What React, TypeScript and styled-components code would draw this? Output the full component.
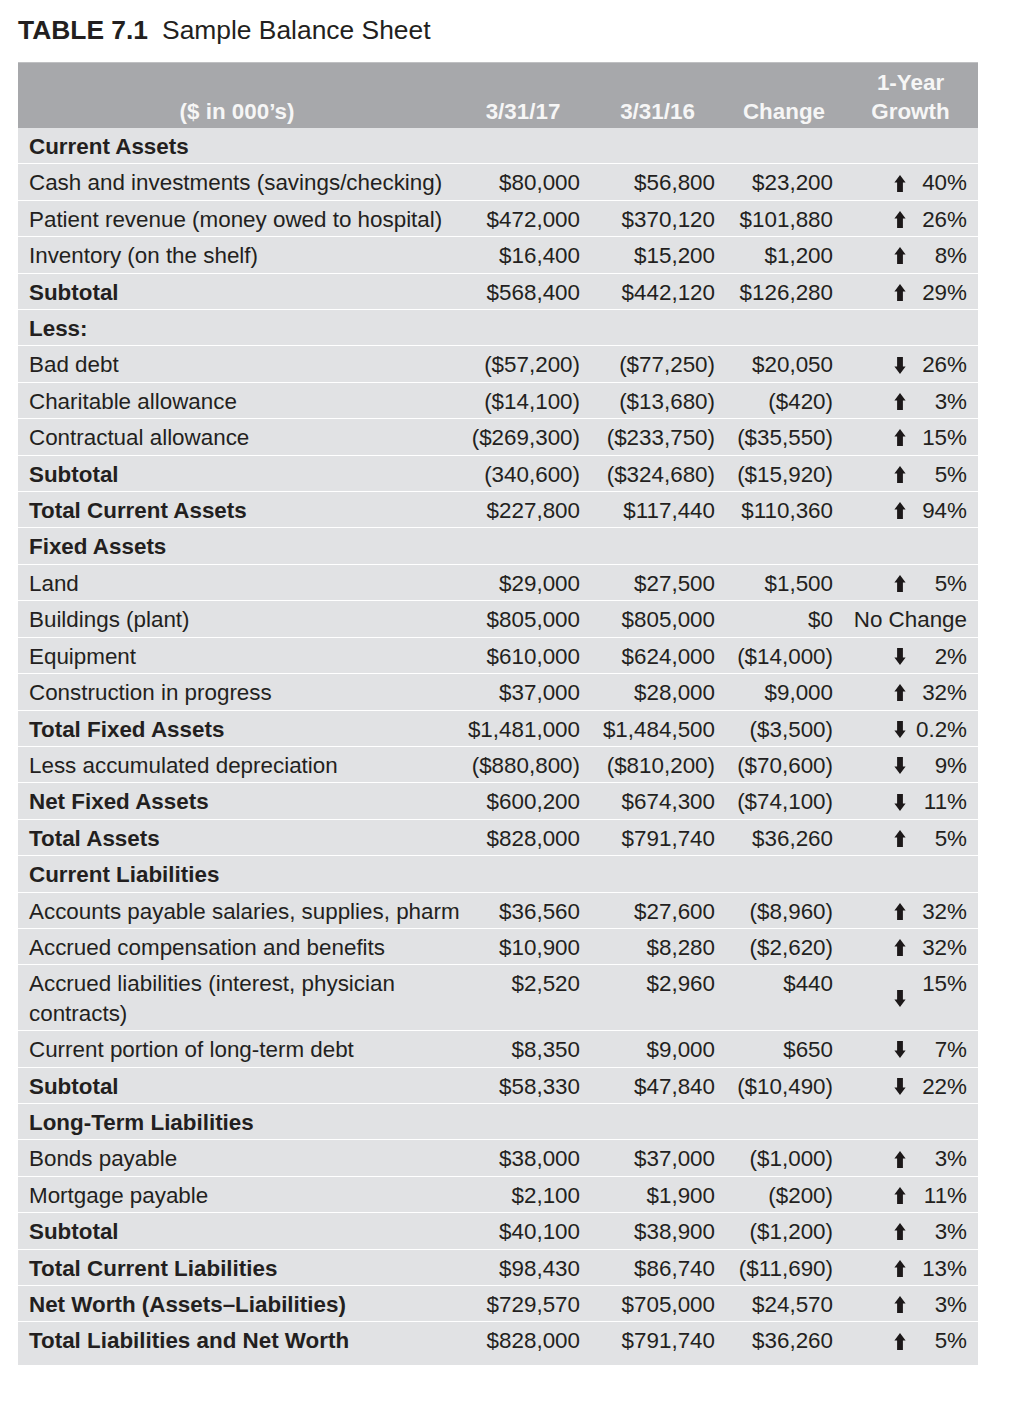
import React from 'react';
import styled, { createGlobalStyle } from 'styled-components';

const GlobalStyle = createGlobalStyle`
    body {
        margin: 0;
        background: #fff;
        font-family: 'Liberation Sans', Arial, sans-serif;
        color: #231f20;
    }
`;

const COLS = '438px 134px 135px 118px 135px';

const Page = styled.div`
    padding: 15px 0 40px 18px;
    width: 960px;
`;

const Title = styled.h1`
    margin: 0 0 17px;
    font-size: 26.4px;
    line-height: 30px;
    font-weight: normal;
    color: #231f20;
    > b {
        margin-right: 14px;
    }
`;

const Table = styled.div`
    width: 960px;
    background: #e1e2e4;
`;

const Head = styled.div`
    display: grid;
    grid-template-columns: ${COLS};
    height: 66px;
    box-sizing: border-box;
    background: #a7a8ab;
    border-top: 1px solid #bfc0c2;
`;

const HeadCell = styled.div`
    align-self: end;
    padding: 0 10px 2px;
    text-align: center;
    font-size: 22.4px;
    line-height: 29px;
    font-weight: bold;
    color: #f6f6f6;
`;

const Row = styled.div<{ $last?: boolean }>`
    display: grid;
    grid-template-columns: ${COLS};
    padding: 4px 0 ${(p) => (p.$last ? '9px' : '2px')};
    border-bottom: ${(p) => (p.$last ? 'none' : '1px solid #fff')};
    font-size: 22.4px;
    line-height: 29.4px;
`;

const Label = styled.div<{ $bold?: boolean }>`
    padding-left: 11px;
    white-space: pre;
    font-weight: ${(p) => (p.$bold ? 'bold' : 'normal')};
`;

const Num = styled.div`
    padding-right: 10px;
    text-align: right;
    white-space: nowrap;
`;

const Growth = styled.div<{ $plain?: boolean }>`
    display: flex;
    align-items: center;
    padding: 0 11px 0 ${(p) => (p.$plain ? '0' : '51px')};
`;

const Pct = styled.span`
    flex: 1;
    align-self: flex-start;
    text-align: right;
    white-space: nowrap;
`;

const ArrowSvg = styled.svg<{ $down?: boolean }>`
    flex: none;
    width: 12px;
    height: 17px;
    transform: ${(p) => (p.$down ? 'rotate(180deg)' : 'none')};
`;

const Arrow = ({ down }: { down?: boolean }) => (
    <ArrowSvg $down={down} viewBox="0 0 12 17">
        <path d="M6 0 L11.6 7.4 L8.9 7.4 L8.9 17 L3.1 17 L3.1 7.4 L0.4 7.4 Z" fill="#1c1819" />
    </ArrowSvg>
);

type Line = {
    label: string;
    kind?: 'head' | 'bold';
    v?: [string, string, string];
    dir?: 'up' | 'down';
    pct?: string;
};

const rows: Line[] = [
    { label: 'Current Assets', kind: 'head' },
    { label: 'Cash and investments (savings/checking)', v: ['$80,000', '$56,800', '$23,200'], dir: 'up', pct: '40%' },
    { label: 'Patient revenue (money owed to hospital)', v: ['$472,000', '$370,120', '$101,880'], dir: 'up', pct: '26%' },
    { label: 'Inventory (on the shelf)', v: ['$16,400', '$15,200', '$1,200'], dir: 'up', pct: '8%' },
    { label: 'Subtotal', kind: 'bold', v: ['$568,400', '$442,120', '$126,280'], dir: 'up', pct: '29%' },
    { label: 'Less:', kind: 'head' },
    { label: 'Bad debt', v: ['($57,200)', '($77,250)', '$20,050'], dir: 'down', pct: '26%' },
    { label: 'Charitable allowance', v: ['($14,100)', '($13,680)', '($420)'], dir: 'up', pct: '3%' },
    { label: 'Contractual allowance', v: ['($269,300)', '($233,750)', '($35,550)'], dir: 'up', pct: '15%' },
    { label: 'Subtotal', kind: 'bold', v: ['(340,600)', '($324,680)', '($15,920)'], dir: 'up', pct: '5%' },
    { label: 'Total Current Assets', kind: 'bold', v: ['$227,800', '$117,440', '$110,360'], dir: 'up', pct: '94%' },
    { label: 'Fixed Assets', kind: 'head' },
    { label: 'Land', v: ['$29,000', '$27,500', '$1,500'], dir: 'up', pct: '5%' },
    { label: 'Buildings (plant)', v: ['$805,000', '$805,000', '$0'], pct: 'No Change' },
    { label: 'Equipment', v: ['$610,000', '$624,000', '($14,000)'], dir: 'down', pct: '2%' },
    { label: 'Construction in progress', v: ['$37,000', '$28,000', '$9,000'], dir: 'up', pct: '32%' },
    { label: 'Total Fixed Assets', kind: 'bold', v: ['$1,481,000', '$1,484,500', '($3,500)'], dir: 'down', pct: '0.2%' },
    { label: 'Less accumulated depreciation', v: ['($880,800)', '($810,200)', '($70,600)'], dir: 'down', pct: '9%' },
    { label: 'Net Fixed Assets', kind: 'bold', v: ['$600,200', '$674,300', '($74,100)'], dir: 'down', pct: '11%' },
    { label: 'Total Assets', kind: 'bold', v: ['$828,000', '$791,740', '$36,260'], dir: 'up', pct: '5%' },
    { label: 'Current Liabilities', kind: 'head' },
    { label: 'Accounts payable salaries, supplies, pharm', v: ['$36,560', '$27,600', '($8,960)'], dir: 'up', pct: '32%' },
    { label: 'Accrued compensation and benefits', v: ['$10,900', '$8,280', '($2,620)'], dir: 'up', pct: '32%' },
    { label: 'Accrued liabilities (interest, physician\ncontracts)', v: ['$2,520', '$2,960', '$440'], dir: 'down', pct: '15%' },
    { label: 'Current portion of long-term debt', v: ['$8,350', '$9,000', '$650'], dir: 'down', pct: '7%' },
    { label: 'Subtotal', kind: 'bold', v: ['$58,330', '$47,840', '($10,490)'], dir: 'down', pct: '22%' },
    { label: 'Long-Term Liabilities', kind: 'head' },
    { label: 'Bonds payable', v: ['$38,000', '$37,000', '($1,000)'], dir: 'up', pct: '3%' },
    { label: 'Mortgage payable', v: ['$2,100', '$1,900', '($200)'], dir: 'up', pct: '11%' },
    { label: 'Subtotal', kind: 'bold', v: ['$40,100', '$38,900', '($1,200)'], dir: 'up', pct: '3%' },
    { label: 'Total Current Liabilities', kind: 'bold', v: ['$98,430', '$86,740', '($11,690)'], dir: 'up', pct: '13%' },
    { label: 'Net Worth (Assets\u2013Liabilities)', kind: 'bold', v: ['$729,570', '$705,000', '$24,570'], dir: 'up', pct: '3%' },
    { label: 'Total Liabilities and Net Worth', kind: 'bold', v: ['$828,000', '$791,740', '$36,260'], dir: 'up', pct: '5%' },
];

export default function App() {
    return (
        <Page>
            <GlobalStyle />
            <Title>
                <b>TABLE 7.1</b>Sample Balance Sheet
            </Title>
            <Table>
                <Head>
                    <HeadCell>($ in 000’s)</HeadCell>
                    <HeadCell>3/31/17</HeadCell>
                    <HeadCell>3/31/16</HeadCell>
                    <HeadCell>Change</HeadCell>
                    <HeadCell>
                        1-Year
                        <br />
                        Growth
                    </HeadCell>
                </Head>
                {rows.map((r, i) => (
                    <Row key={i} $last={i === rows.length - 1}>
                        <Label $bold={!!r.kind}>{r.label}</Label>
                        {r.v && (
                            <>
                                <Num>{r.v[0]}</Num>
                                <Num>{r.v[1]}</Num>
                                <Num>{r.v[2]}</Num>
                                <Growth $plain={!r.dir}>
                                    {r.dir && <Arrow down={r.dir === 'down'} />}
                                    <Pct>{r.pct}</Pct>
                                </Growth>
                            </>
                        )}
                    </Row>
                ))}
            </Table>
        </Page>
    );
}
